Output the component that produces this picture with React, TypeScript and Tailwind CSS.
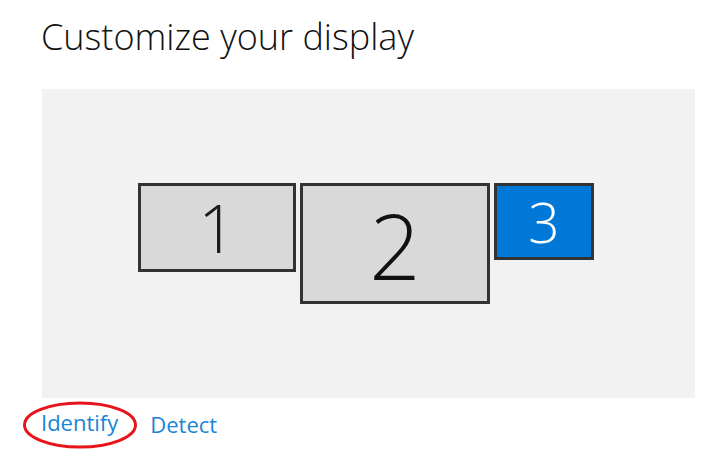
import React from 'react';

const Monitor: React.FC<{ label: string; className: string; textClass: string }> = ({ label, className, textClass }) => (
  <div className={`flex items-center justify-center border-[3px] border-[#333333] ${className}`}>
    <span className={`font-light leading-none ${textClass}`}>{label}</span>
  </div>
);

export default function App() {
  return (
    <div className="w-[714px] h-[456px] bg-white" style={{ fontFamily: '"Open Sans", "Noto Sans", sans-serif' }}>
      {/* Header */}
      <h1 className="pl-[41px] pt-[15px] h-[89px] text-[36px] font-light text-[#111] leading-[44px]">
        Customize your display
      </h1>

      {/* Display arrangement */}
      <div className="ml-[42px] w-[653px] h-[309px] bg-[#f2f2f2] flex items-start pt-[94px] pl-[96px] gap-[4px]">
        <Monitor
          label="1"
          className="w-[158px] h-[89px] bg-[#d9d9d9]"
          textClass="text-[66px] text-[#1a1a1a] -mt-[2px]"
        />
        <Monitor
          label="2"
          className="w-[190px] h-[121px] bg-[#d9d9d9]"
          textClass="text-[90px] text-[#111] mt-[2px]"
        />
        <Monitor
          label="3"
          className="w-[100px] h-[77px] bg-[#0078d7]"
          textClass="text-[55px] text-white"
        />
      </div>

      {/* Links */}
      <div className="flex items-center gap-[32px] pl-[41px] pt-[9px] leading-[30px]">
        <div className="relative">
          <span className="text-[22px] text-[#1a84d6]">Identify</span>
          <svg className="absolute left-[-20px] top-[-7px]" width="120" height="50" viewBox="0 0 120 50">
            <ellipse cx="59" cy="25" rx="55.5" ry="22" fill="none" stroke="#e8141b" strokeWidth="3" />
          </svg>
        </div>
        <span className="text-[22px] text-[#1a84d6]">Detect</span>
      </div>
    </div>
  );
}
